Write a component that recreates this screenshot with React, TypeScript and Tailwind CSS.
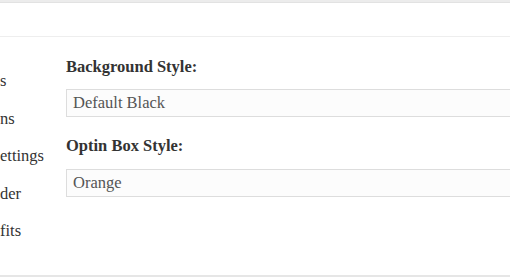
export default function App() {
  const sideItems = ["s", "ns", "ettings", "der", "fits"]

  return (
    <div className="w-[510px] h-[277px] overflow-hidden bg-white font-['Liberation_Serif',serif] flex flex-col">
      <div className="h-[3px] bg-[#ececec] border-b border-[#e2e2e2]" />
      <div className="h-[34px] border-b border-[#eeeeee]" />

      <div className="flex flex-1 min-h-0">
        {/* sidebar, cut off on the left */}
        <ul className="w-[66px] shrink-0 pt-[25px] text-[16.5px] text-[#333]">
          {sideItems.map((item) => (
            <li key={item} className="h-[37.5px] leading-[37.5px] whitespace-nowrap">
              {item}
            </li>
          ))}
        </ul>

        <div className="flex-1 overflow-hidden pt-[20px]">
          <label className="block text-[16.5px] leading-[20px] font-bold text-[#333] mb-[12px]">
            Background Style:
          </label>
          <div className="w-[480px] h-[28px] border border-[#dddddd] bg-[#fcfcfc] pl-[6px] text-[16.5px] leading-[26px] text-[#555]">
            Default Black
          </div>

          <label className="block mt-[19px] text-[16.5px] leading-[20px] font-bold text-[#333] mb-[13px]">
            Optin Box Style:
          </label>
          <div className="w-[480px] h-[28px] border border-[#dddddd] bg-[#fcfcfc] pl-[6px] text-[16.5px] leading-[26px] text-[#555]">
            Orange
          </div>
        </div>
      </div>

      <div className="h-[2px] bg-[#e6e6e6]" />
    </div>
  )
}
